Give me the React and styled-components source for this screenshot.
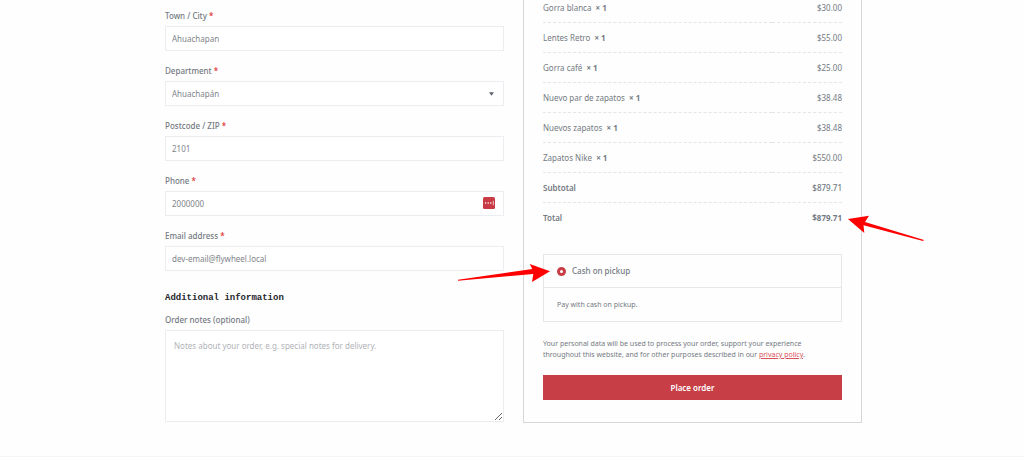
import React from "react";
import styled, { createGlobalStyle } from "styled-components";

const items = [
  { name: "Gorra blanca", price: "$30.00" },
  { name: "Lentes Retro", price: "$55.00" },
  { name: "Gorra café", price: "$25.00" },
  { name: "Nuevo par de zapatos", price: "$38.48" },
  { name: "Nuevos zapatos", price: "$38.48" },
  { name: "Zapatos Nike", price: "$550.00" },
];

function Field({ id, label, children }) {
  return (
    <FieldGroup>
      <Label htmlFor={id}>
        {label} <Required>*</Required>
      </Label>
      {children}
    </FieldGroup>
  );
}

export default function App() {
  return (
    <>
      <GlobalStyle />
      <Page>
        <Checkout>
          <Column>
            <Field id="city" label="Town / City">
              <Input id="city" defaultValue="Ahuachapan" />
            </Field>
            <Field id="department" label="Department">
              <Control>
                <Select id="department" defaultValue="Ahuachapán">
                  <option>Ahuachapán</option>
                </Select>
                <Caret viewBox="0 0 6 4">
                  <path d="M0 0h6L3 4z" fill="#5d646d" />
                </Caret>
              </Control>
            </Field>
            <Field id="postcode" label="Postcode / ZIP">
              <Input id="postcode" defaultValue="2101" />
            </Field>
            <Field id="phone" label="Phone">
              <Control>
                <Input id="phone" type="tel" defaultValue="2000000" />
                <FillIcon viewBox="0 0 12 12">
                  <rect width="12" height="12" rx="1.5" fill="#c93b44" />
                  <circle cx="2.6" cy="6" r="0.8" fill="#fff" />
                  <circle cx="5.2" cy="6" r="0.8" fill="#fff" />
                  <circle cx="7.8" cy="6" r="0.8" fill="#fff" />
                  <path d="M10.3 3.8v4.4" stroke="#fff" strokeWidth="0.7" />
                </FillIcon>
              </Control>
            </Field>
            <Field id="email" label="Email address">
              <Input id="email" type="email" defaultValue="dev-email@flywheel.local" />
            </Field>
            <Heading>Additional information</Heading>
            <Label htmlFor="notes">Order notes (optional)</Label>
            <Notes
              id="notes"
              placeholder="Notes about your order, e.g. special notes for delivery."
            />
          </Column>

          <Summary>
            <Table>
              <tbody>
                {items.map((item) => (
                  <tr key={item.name}>
                    <Cell>
                      {item.name} <Quantity>× 1</Quantity>
                    </Cell>
                    <Cell $right>{item.price}</Cell>
                  </tr>
                ))}
                <tr>
                  <Cell as="th" scope="row" $weight={600}>Subtotal</Cell>
                  <Cell $right $weight={500}>$879.71</Cell>
                </tr>
                <tr>
                  <Cell as="th" scope="row" $weight={600} $last>Total</Cell>
                  <Cell $right $weight={700} $last>
                    <Anchor>
                      $879.71
                      <TotalArrow viewBox="0 0 76 26">
                        <path d="M0 4 21 .7 17 7 76 25 75 26 15.5 10.3 16.3 18z" fill="#f00" />
                      </TotalArrow>
                    </Anchor>
                  </Cell>
                </tr>
              </tbody>
            </Table>

            <Payment>
              <Method>
                <Radio type="radio" id="cash" name="payment" defaultChecked />
                <MethodLabel htmlFor="cash">Cash on pickup</MethodLabel>
                <MethodArrow viewBox="0 0 92 20">
                  <path d="M92 8.3 71.7 1 74.3 6 0 16.7v1L75.3 11 74 19z" fill="#f00" />
                </MethodArrow>
              </Method>
              <MethodText>Pay with cash on pickup.</MethodText>
            </Payment>

            <Privacy>
              Your personal data will be used to process your order, support your experience
              throughout this website, and for other purposes described in our{" "}
              <a href="#privacy">privacy policy</a>.
            </Privacy>
            <OrderButton type="button">Place order</OrderButton>
          </Summary>
        </Checkout>
        <Footer />
      </Page>
    </>
  );
}

const GlobalStyle = createGlobalStyle`
  * {
    box-sizing: border-box;
  }
  body {
    margin: 0;
    background: #fefefe;
    color: #747a82;
    font-family: "Noto Sans", "Open Sans", sans-serif;
    font-size: 8px;
    line-height: 14px;
  }
  input, select, textarea, button {
    font: inherit;
  }
`;

const Page = styled.div`
  overflow: hidden;
`;

const Checkout = styled.main`
  display: grid;
  grid-template-columns: 1fr 1fr;
  align-items: start;
  gap: 19px;
  padding: 0 162px 0 165px;
`;

const Column = styled.section`
  min-width: 0;
  padding-top: 9px;
`;

const FieldGroup = styled.div`
  margin-bottom: 13px;
`;

const Label = styled.label`
  display: block;
  margin-bottom: 3px;
  font-weight: 500;
`;

const Required = styled.span`
  color: #e02b2b;
`;

const Control = styled.div`
  position: relative;
`;

const Input = styled.input`
  display: block;
  width: 100%;
  height: 25px;
  padding: 0 6px;
  border: 1px solid #ebedf0;
  border-radius: 0;
  background: #fff;
  color: #7f848a;
  outline: none;
`;

const Select = styled(Input).attrs({ as: "select" })`
  appearance: none;
`;

const Caret = styled.svg`
  position: absolute;
  top: 11px;
  right: 10px;
  width: 5px;
  height: 4px;
`;

const FillIcon = styled.svg`
  position: absolute;
  top: 6px;
  right: 9px;
  width: 12px;
  height: 12px;
`;

const Heading = styled.h3`
  margin: 20px 0 8px;
  color: #25262c;
  font-family: "Liberation Mono", monospace;
  font-size: 9px;
  font-weight: 700;
  line-height: 14px;
`;

const Notes = styled.textarea`
  display: block;
  width: 100%;
  height: 92px;
  padding: 8px;
  border: 1px solid #ebedf0;
  background: #fff;
  resize: vertical;
  outline: none;
  &::placeholder {
    color: #b0b3b7;
  }
`;

const Summary = styled.section`
  min-width: 0;
  padding: 0 19px 22px;
  border: 1px solid #d6d7d9;
  border-top: 0;
`;

const Table = styled.table`
  width: 100%;
  margin-top: -7px;
  border-spacing: 0;
`;

const Cell = styled.td`
  height: 30px;
  padding: 0;
  border-bottom: ${(props) => (props.$last ? "0" : "1px dashed #e4e5e7")};
  font-weight: ${(props) => props.$weight || 400};
  text-align: ${(props) => (props.$right ? "right" : "left")};
`;

const Quantity = styled.strong`
  margin-left: 2px;
`;

const Anchor = styled.span`
  position: relative;
`;

const TotalArrow = styled.svg`
  position: absolute;
  top: 3px;
  left: calc(100% + 6px);
  width: 76px;
  height: 26px;
`;

const Payment = styled.div`
  margin-top: 21px;
  border: 1px solid #e6e7e9;
`;

const Method = styled.div`
  position: relative;
  display: flex;
  align-items: center;
  gap: 6px;
  height: 33px;
  padding: 0 13px;
  border-bottom: 1px solid #e6e7e9;
`;

const Radio = styled.input`
  appearance: none;
  width: 9px;
  height: 9px;
  margin: 0;
  border: 3px solid #c83e46;
  border-radius: 50%;
  background: #fff;
`;

const MethodLabel = styled.label`
  font-weight: 500;
`;

const MethodArrow = styled.svg`
  position: absolute;
  top: 8px;
  right: calc(100% - 6px);
  width: 92px;
  height: 20px;
`;

const MethodText = styled.p`
  margin: 0;
  padding: 10px 13px 9px;
  font-size: 7px;
`;

const Privacy = styled.p`
  margin: 16px 0 15px;
  padding-right: 24px;
  font-size: 7px;
  line-height: 11px;
  a {
    color: #d9535b;
  }
`;

const OrderButton = styled.button`
  display: block;
  width: 100%;
  height: 25px;
  padding: 0;
  border: 0;
  background: #c83e46;
  color: #fff;
  font-weight: 600;
`;

const Footer = styled.footer`
  margin-top: 33px;
  border-top: 1px solid #f4f4f5;
`;
